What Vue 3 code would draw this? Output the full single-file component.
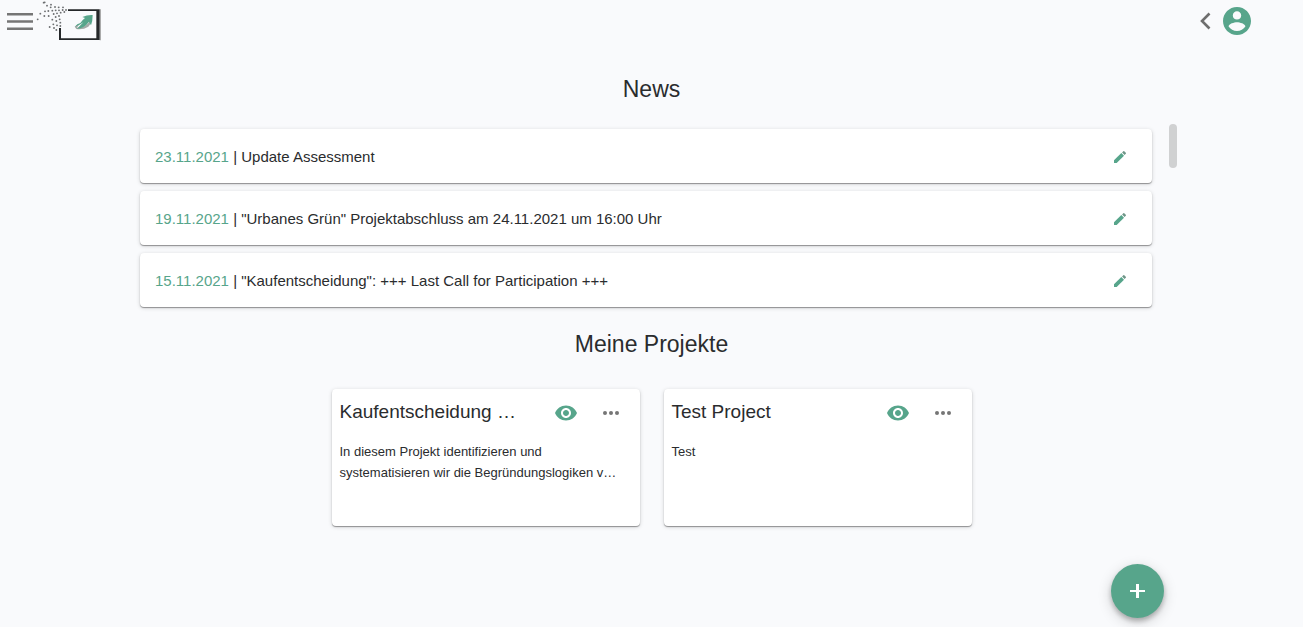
<script setup>
const news = [
  { date: '23.11.2021', title: 'Update Assessment' },
  { date: '19.11.2021', title: '"Urbanes Grün" Projektabschluss am 24.11.2021 um 16:00 Uhr' },
  { date: '15.11.2021', title: '"Kaufentscheidung": +++ Last Call for Participation +++' },
]

const projects = [
  {
    title: 'Kaufentscheidung …',
    lines: ['In diesem Projekt identifizieren und', 'systematisieren wir die Begründungslogiken v…'],
  },
  { title: 'Test Project', lines: ['Test'] },
]

const dots = [
  [8, 58], [26, 8], [29, 7], [16, 41], [30, 34], [28, 48], [36, 17], [48, 14], [40, 33], [41, 48],
  [44, 81], [52, 32], [47, 22], [60, 21], [71, 22], [84, 22], [62, 31], [72, 31], [83, 30],
  [93, 30], [56, 42], [66, 40], [77, 38], [88, 36], [52, 59], [62, 51],
  [72, 48], [55, 73], [64, 63], [74, 58], [66, 76], [76, 68], [57, 84], [64, 90], [76, 78],
]
</script>

<template>
  <div class="page">
    <header class="bar">
      <button class="icon-button menu" aria-label="Menü">
        <svg width="26" height="18" viewBox="0 0 26 18" fill="#757575">
          <path d="M0 0h26v2.6H0zM0 7.2h26v2.6H0zM0 14.4h26V17H0z" />
        </svg>
      </button>
      <a class="logo" href="#" aria-label="Startseite">
        <svg width="70" height="45" viewBox="0 0 210 135">
          <circle v-for="(d, i) in dots" :key="i" :cx="d[0]" :cy="d[1]" r="2.8" fill="#6c6e70" />
          <path d="M194 28h4v93h-4z" fill="#aaa" />
          <path d="M99 28h95v92H72V84h6v31h106V33H99z" fill="#242729" />
          <path d="M119 80Q124 74 133 72L126 83Q150 84 165 63L168 70L160 80Q144 90 124 87z" fill="#a3aaa7" />
          <path d="M142 51Q157 44 173 45Q173 63 168 76L162 65Q148 85 126 86L145 67Q134 76 120 80Q126 71 136 69Q142 60 150 54z" fill="#57a58b" />
        </svg>
      </a>
      <span class="spacer"></span>
      <button class="icon-button back" aria-label="Zurück">
        <svg width="11" height="18" viewBox="0 0 11 18" fill="none" stroke="#6e6e6e" stroke-width="2.6">
          <path d="M9.5 1.5 2 9l7.500 7.500" />
        </svg>
      </button>
      <button class="icon-button account" aria-label="Konto">
        <svg width="28" height="28" viewBox="2 2 20 20" fill="#57a58b">
          <path d="M12 2C6.480 2 2 6.480 2 12s4.480 10 10 10 10-4.480 10-10S17.520 2 12 2zm0 3c1.660 0 3 1.340 3 3s-1.340 3-3 3-3-1.340-3-3 1.340-3 3-3zm0 14.200c-2.500 0-4.710-1.280-6-3.220.030-1.990 4-3.080 6-3.080 1.990 0 5.970 1.090 6 3.080-1.290 1.940-3.500 3.220-6 3.220z" />
        </svg>
      </button>
    </header>

    <main>
      <h1>News</h1>
      <section class="news" aria-label="News">
        <ul class="news-list">
          <li v-for="item in news" :key="item.date" class="card news-item">
            <p><time>{{ item.date }}</time> | {{ item.title }}</p>
            <button class="icon-button" aria-label="Bearbeiten">
              <svg width="16" height="16" viewBox="0 0 24 24">
                <path d="M3 17v4h4L18 10l-4-4z" fill="#57a58b" />
                <path d="M20.710 7.040a1 1 0 0 0 0-1.410l-2.340-2.340a1 1 0 0 0-1.410 0l-1.830 1.830 3.750 3.750 1.830-1.830z" fill="#6f9688" />
              </svg>
            </button>
          </li>
        </ul>
        <div class="thumb"></div>
      </section>

      <h2>Meine Projekte</h2>
      <section class="projects" aria-label="Meine Projekte">
        <article v-for="project in projects" :key="project.title" class="card project">
          <div class="project-head">
            <h3>{{ project.title }}</h3>
            <button class="icon-button" aria-label="Ansehen">
              <svg width="22" height="16" viewBox="1 4 22 16" fill="#57a58b">
                <path d="M12 4.500C7 4.500 2.730 7.610 1 12c1.730 4.390 6 7.500 11 7.500s9.270-3.110 11-7.500c-1.730-4.390-6-7.500-11-7.500zM12 17c-2.760 0-5-2.240-5-5s2.240-5 5-5 5 2.240 5 5-2.240 5-5 5zm0-8c-1.660 0-3 1.340-3 3s1.340 3 3 3 3-1.340 3-3-1.340-3-3-3z" />
              </svg>
            </button>
            <button class="icon-button" aria-label="Mehr">
              <svg width="16" height="4" viewBox="0 0 16 4" fill="#757575">
                <circle cx="2" cy="2" r="2" /><circle cx="8" cy="2" r="2" /><circle cx="14" cy="2" r="2" />
              </svg>
            </button>
          </div>
          <p><span v-for="line in project.lines" :key="line">{{ line }}</span></p>
        </article>
      </section>
    </main>

    <button class="fab" aria-label="Projekt hinzufügen">
      <svg width="15" height="15" viewBox="0 0 15 15" fill="#fff">
        <path d="M6 0h3v6h6v2H9v6H6V8H0V6h6z" />
      </svg>
    </button>
  </div>
</template>

<style>
body {
  margin: 0;
  background: #f9fafc;
}
</style>

<style scoped>
.page {
  min-height: 100vh;
  color: #2a2c2e;
  font-family: "Liberation Sans", Arial, sans-serif;
}

h1,
h2,
h3,
p,
ul {
  margin: 0;
  padding: 0;
  font-weight: 400;
}

svg {
  display: block;
}

.icon-button {
  padding: 0;
  border: 0;
  background: none;
  cursor: pointer;
}

.bar {
  display: flex;
  align-items: center;
  height: 42px;
  padding: 0 52px 0 7px;
}

.menu {
  padding-top: 2px;
}

.logo {
  align-self: flex-start;
  margin-left: 2px;
}

.spacer {
  flex: 1;
}

.back {
  margin-right: 12px;
}

h1,
h2 {
  font-size: 23px;
  line-height: 28px;
  text-align: center;
}

h1 {
  padding-top: 33px;
}

h2 {
  padding-top: 15px;
}

.news {
  display: flex;
  gap: 17px;
  margin: 21px 126px 0;
}

.news-list {
  display: flex;
  flex: 1;
  flex-direction: column;
  gap: 8px;
  padding: 5px 0 8px 14px;
  list-style: none;
}

.thumb {
  width: 8px;
  height: 44px;
  border-radius: 4px;
  background: #d0d1d2;
}

.card {
  border-radius: 4px;
  background: #fff;
  box-shadow: 0 1px 1px rgba(0, 0, 0, 0.36), 0 1px 4px rgba(0, 0, 0, 0.16);
}

.news-item {
  display: flex;
  align-items: center;
  justify-content: space-between;
  height: 54px;
  padding: 0 24px 0 15px;
  box-sizing: border-box;
  font-size: 15px;
  line-height: 20px;
}

.news-item p {
  padding-top: 2px;
}

.news-item .icon-button {
  padding-top: 2px;
}

time {
  color: #57a58b;
}

.projects {
  display: flex;
  flex-wrap: wrap;
  justify-content: center;
  gap: 24px;
  padding: 31px 0 24px;
}

.project {
  width: 308px;
  min-height: 137px;
  padding: 8px 21px 8px 8px;
  box-sizing: border-box;
}

.project-head {
  display: flex;
  align-items: center;
  height: 30px;
}

.project-head h3 {
  flex: 1;
  font-size: 19px;
  line-height: 30px;
  white-space: nowrap;
}

.project-head .icon-button {
  padding-top: 2px;
  margin-left: 26px;
}

.project p {
  padding-top: 14px;
  font-size: 13px;
  line-height: 21px;
  white-space: nowrap;
}

.project p span {
  display: block;
}

.fab {
  position: fixed;
  right: 139px;
  bottom: 9px;
  display: grid;
  place-items: center;
  width: 53px;
  height: 54px;
  padding: 0;
  border: 0;
  border-radius: 50%;
  background: #57a58b;
  box-shadow: 0 3px 5px rgba(0, 0, 0, 0.24), 0 4px 14px rgba(0, 0, 0, 0.18);
  cursor: pointer;
}
</style>
